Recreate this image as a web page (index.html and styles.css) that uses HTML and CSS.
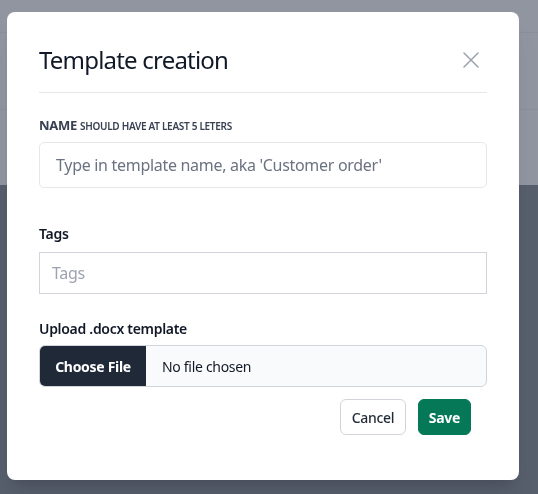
FILE: index.html
```html
<!DOCTYPE html>
<html lang="en">
<head>
    <meta charset="UTF-8">
    <meta name="viewport" content="width=device-width, initial-scale=1.0">
    <title>Templates</title>
    <link rel="stylesheet" href="styles.css">
</head>
<body>
    <div class="page">
        <div class="page-top"></div>
        <div class="page-toolbar"></div>
        <div class="page-sub"></div>
        <div class="page-body"></div>
    </div>

    <div class="overlay">
        <div class="modal">
            <div class="modal-header">
                <h3 class="modal-title">Template creation</h3>
                <button class="close-btn" type="button" aria-label="Close">
                    <svg width="16" height="16" viewBox="0 0 16 16" fill="none" stroke="currentColor" stroke-width="1.5" stroke-linecap="round">
                        <path d="M1 1L15 15M15 1L1 15"/>
                    </svg>
                </button>
            </div>
            <form class="modal-form">
                <label class="label-name" for="tplName">NAME <span class="hint">should have at least 5 leters</span></label>
                <input class="input-name" id="tplName" type="text" placeholder="Type in template name, aka 'Customer order'">

                <label class="label" for="tplTags">Tags</label>
                <input class="input-tags" id="tplTags" type="text" placeholder="Tags">

                <label class="label label-upload">Upload .docx template</label>
                <div class="file-input">
                    <span class="file-btn">Choose File</span>
                    <span class="file-name">No file chosen</span>
                </div>

                <div class="actions">
                    <button type="button" class="btn btn-cancel">Cancel</button>
                    <button type="submit" class="btn btn-save">Save</button>
                </div>
            </form>
        </div>
    </div>
</body>
</html>
```

FILE: styles.css
```css
* {
    box-sizing: border-box;
}
body {
    margin: 0;
    font-family: "Noto Sans", "Open Sans", sans-serif;
    letter-spacing: -0.3px;
    color: #1f2937;
    height: 100vh;
    overflow: hidden;
}
/* page behind the dialog */
.page {
    height: 100%;
    display: flex;
    flex-direction: column;
    background-color: #1f2937;
}
.page-top {
    height: 33px;
    background-color: #ffffff;
    border-bottom: 1px solid #e5e7eb;
}
.page-toolbar {
    height: 77px;
    background-color: #ffffff;
    border-bottom: 1px solid #e5e7eb;
}
.page-sub {
    height: 75px;
    background-color: #ffffff;
}
.page-body {
    flex: 1;
}
.overlay {
    position: fixed;
    inset: 0;
    background-color: rgba(107, 114, 128, 0.75);
    display: flex;
    justify-content: flex-start;
    align-items: flex-start;
    padding: 12px 0 0 7px;
}
.modal {
    width: 512px;
    height: 468px;
    background-color: #ffffff;
    border-radius: 8px;
    box-shadow: 0 20px 25px -5px rgba(0,0,0,0.1), 0 8px 10px -6px rgba(0,0,0,0.1);
    padding: 32px 32px 0 32px;
}
.modal-header {
    display: flex;
    align-items: center;
    justify-content: space-between;
    border-bottom: 1px solid #e5e7eb;
    padding-bottom: 16px;
}
.modal-title {
    margin: 0;
    font-size: 24px;
    line-height: 32px;
    font-weight: 400;
    letter-spacing: -0.8px;
    color: #111827;
}
.close-btn {
    border: none;
    background: none;
    padding: 0;
    margin-right: 8px;
    color: #9ca3af;
    display: flex;
    cursor: pointer;
}
.modal-form {
    display: flex;
    flex-direction: column;
}
.label-name {
    margin-top: 24px;
    font-size: 13px;
    line-height: 16px;
    font-weight: 700;
    color: #374151;
}
.hint {
    font-size: 10px;
    text-transform: uppercase;
    font-weight: 600;
}
.input-name {
    margin-top: 8px;
    height: 46px;
    border: 1px solid #e5e7eb;
    border-radius: 5px;
    padding: 0 16px;
    font-family: inherit;
    font-size: 16px;
    letter-spacing: -0.3px;
    color: #111827;
}
.input-name::placeholder {
    color: #6b7280;
}
.label {
    font-size: 14px;
    line-height: 20px;
    font-weight: 600;
    color: #111827;
    margin-top: 36px;
}
.input-tags {
    margin-top: 8px;
    height: 42px;
    border: 1px solid #d1d5db;
    border-radius: 0;
    padding: 0 12px;
    font-family: inherit;
    font-size: 16px;
    letter-spacing: -0.3px;
}
.input-tags::placeholder {
    color: #9ca3af;
}
.label-upload {
    margin-top: 25px;
}
.file-input {
    margin-top: 6px;
    height: 42px;
    display: flex;
    align-items: stretch;
    border: 1px solid #d1d5db;
    border-radius: 6px;
    background-color: #f9fafb;
    overflow: hidden;
}
.file-btn {
    width: 106px;
    background-color: #1f2937;
    color: #ffffff;
    font-size: 14px;
    font-weight: 700;
    display: flex;
    align-items: center;
    justify-content: center;
}
.file-name {
    display: flex;
    align-items: center;
    padding-left: 16px;
    font-size: 14px;
    color: #111827;
}
.actions {
    display: flex;
    justify-content: flex-end;
    gap: 12px;
    margin-top: 12px;
    padding-right: 16px;
}
.btn {
    height: 36px;
    border-radius: 6px;
    font-family: inherit;
    font-size: 14px;
    letter-spacing: -0.3px;
    cursor: pointer;
}
.btn-cancel {
    width: 66px;
    padding: 0;
    background-color: #ffffff;
    border: 1px solid #d1d5db;
    color: #1f2937;
    font-weight: 500;
}
.btn-save {
    width: 53px;
    padding: 0;
    background-color: #047857;
    border: 1px solid #047857;
    color: #ffffff;
    font-weight: 700;
}
```
